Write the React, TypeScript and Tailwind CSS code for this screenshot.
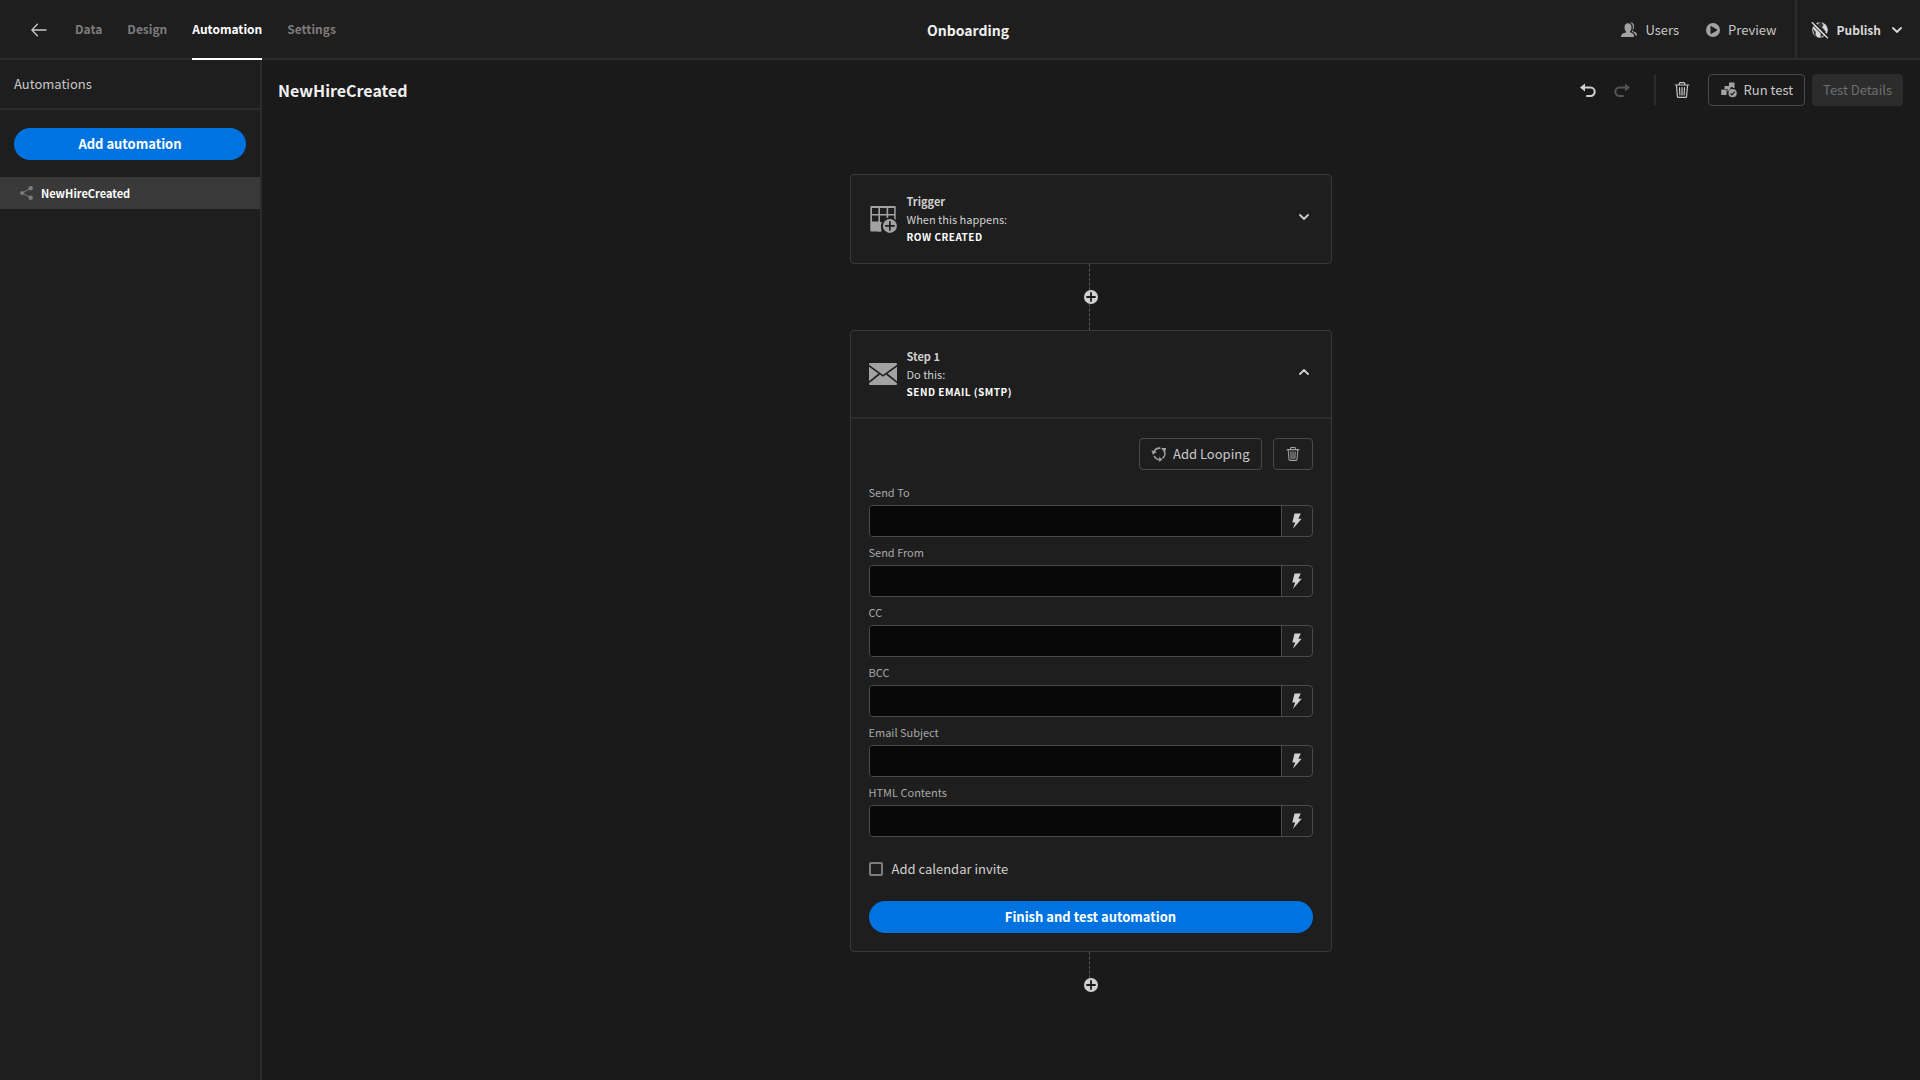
import { useState } from "react";
import type { ReactNode } from "react";

const tabs = ["Data", "Design", "Automation", "Settings"];

const fields = [
  "Send To",
  "Send From",
  "CC",
  "BCC",
  "Email Subject",
  "HTML Contents",
];

function BackIcon() {
  return (
    <svg width="16" height="16" viewBox="0 0 16 16" fill="none" stroke="currentColor" strokeWidth="1.3">
      <path d="M15.500 8H1M6.800 1.800 0.900 8l5.900 6.200" />
    </svg>
  );
}

function UsersIcon() {
  return (
    <svg width="16" height="16" viewBox="0 0 16 16" fill="currentColor">
      <path d="M0 15c0-2.600 1.300-3.800 4.300-4.300.6-.1.8-.6.7-1.200C4 8.400 3.500 7 3.500 5.400 3.500 2.600 5 1.200 7 1.200s3.500 1.400 3.500 4.200c0 1.600-.5 3-1.500 4-.1.600.1 1.100.7 1.200 2.300.5 3.400 1.700 3.400 4.400z" />
      <path d="M9.300.7c2.100-.5 3.700.9 3.700 3.800 0 1.700-.5 2.900-1.300 3.900-.1.600.100 1 .7 1.200 2.400.5 3.600 1.500 3.600 3.800h-1.800c-.300-2-1.500-3.100-3.600-3.700.9-1.100 1.300-2.500 1.300-4.300 0-2.200-.9-3.900-2.600-4.700z" />
    </svg>
  );
}

function PlayIcon() {
  return (
    <svg width="14" height="14" viewBox="0 0 14 14" fill="currentColor">
      <path
        fillRule="evenodd"
        d="M7 0a7 7 0 1 0 0 14A7 7 0 0 0 7 0zM4.500 3.400v7.200c0 .3.300.4.500.3l6-3.500c.3-.2.300-.6 0-.8L5 3.100c-.2-.100-.5 0-.5.3z"
      />
    </svg>
  );
}

function GlobeStrikeIcon() {
  return (
    <svg width="18" height="18" viewBox="0 0 18 18">
      <circle cx="9" cy="9" r="7.800" fill="currentColor" />
      <path d="M8.200 1.200 6.500 4l2 1.500-.6 2 3 3.500-1.500 2.500.6 3.400 2-2.800.4-3L15 11l-2.500-3.500L11 7l1.500-3-2-2.800z" fill="#1e1e1e" opacity=".85" />
      <path d="M1.500 7.500 5 11l-.5 2.500 2 3-3-2z" fill="#1e1e1e" opacity=".85" />
      <path d="M1.800.2 18 16.400" stroke="#1e1e1e" strokeWidth="2" />
      <path d="M.8 1.200 16.800 17.200" stroke="currentColor" strokeWidth="1.400" />
      <path d="M0 2.400 15.600 18" stroke="#1e1e1e" strokeWidth="1" />
    </svg>
  );
}

function ChevronIcon({ up = false }: { up?: boolean }) {
  return (
    <svg width="10" height="6" viewBox="0 0 10 6" fill="none" stroke="currentColor" strokeWidth="1.800" strokeLinecap="round">
      <path d={up ? "M1 5l4-4 4 4" : "M1 1l4 4 4-4"} />
    </svg>
  );
}

function UndoIcon({ flip = false }: { flip?: boolean }) {
  return (
    <svg width="16" height="14" viewBox="0 0 16 14" className={flip ? "-scale-x-100" : ""}>
      <path d="M3 4.500h7.500a4.200 4.200 0 0 1 0 8.400H7" fill="none" stroke="currentColor" strokeWidth="2" strokeLinecap="round" />
      <path d="M5 .4v8.200L0 4.500z" fill="currentColor" />
    </svg>
  );
}

function TrashIcon({ size = 16 }: { size?: number }) {
  return (
    <svg width={size} height={size} viewBox="0 0 16 16" fill="none" stroke="currentColor" strokeWidth="1.200">
      <path d="M.8 3h14.400M5.300 3V1.500c0-.6.300-.9.900-.9h3.600c.6 0 .9.300.9.900V3" />
      <path d="M2.500 3.300l.9 11c.1.700.4 1 1.100 1h7c.700 0 1-.3 1.100-1l.9-11" />
      <path d="M5.500 5.500l.4 7.500M8 5.500V13M10.500 5.500l-.4 7.500" strokeLinecap="round" />
    </svg>
  );
}

function RunTestIcon() {
  return (
    <svg width="18" height="18" viewBox="0 0 18 18" fill="currentColor">
      <path d="M9 1.500h5.500V7h-1.600V6H12L9 7z" />
      <path d="M4.500 5h5.800v3L8.700 9.500 7.500 11V8h-3z" />
      <rect x="1.200" y="8.600" width="5.400" height="5.400" />
      <circle cx="12.600" cy="12.200" r="4.100" />
      <path d="M10.500 12.300l1.500 1.600 2.800-3.300" fill="none" stroke="#1a1a1a" strokeWidth="1.200" />
    </svg>
  );
}

function ShareIcon() {
  return (
    <svg width="14" height="14" viewBox="0 0 14 14" fill="currentColor">
      <path d="M2.200 7 11 2.200M2.200 7 11 11.800" stroke="currentColor" strokeWidth="1" />
      <circle cx="2.200" cy="7" r="2.100" />
      <circle cx="10.700" cy="2.300" r="2.200" />
      <circle cx="10.700" cy="11.700" r="2.200" />
    </svg>
  );
}

function TableAddIcon() {
  return (
    <svg width="28" height="28" viewBox="0 0 28 28">
      <rect x="1.300" y="1" width="25.400" height="25.400" rx="1" fill="currentColor" />
      <path d="M3 3h6.400v6H3zM11 3h6.600v6H11zM19.200 3h6v6h-6zM3 10.600h6.400v6H3zM11 10.600h6.600V18H11zM19.200 10.600h6V18h-6z" fill="#1e1e1e" />
      <path d="M12 17h16v11H12z" fill="#1e1e1e" />
      <path d="M9.500 17h3.500l-1 3.500.5 5.900H9z" fill="currentColor" />
      <circle cx="20.900" cy="20.900" r="8.500" fill="#1e1e1e" />
      <circle cx="20.900" cy="20.900" r="7" fill="currentColor" />
      <path d="M20.900 16.800v8.200M16.800 20.900h8.200" stroke="#1e1e1e" strokeWidth="1.700" strokeLinecap="round" />
    </svg>
  );
}

function EmailIcon() {
  return (
    <svg width="28" height="28" viewBox="0 0 28 28">
      <rect y="3" width="28" height="22" rx="1" fill="currentColor" />
      <path d="M-1 5l15 10.800L29 5M-1 23l11.300-9M29 23l-11.300-9" fill="none" stroke="#1e1e1e" strokeWidth="1.600" />
    </svg>
  );
}

function LoopIcon() {
  return (
    <svg width="16" height="16" viewBox="0 0 16 16" fill="none" stroke="currentColor" strokeWidth="1.600">
      <path d="M13.200 5a5.800 5.800 0 0 1-1.700 7.400M8.800 13.600a5.800 5.800 0 0 1-5.600-3.600M3.200 5.600A5.800 5.800 0 0 1 9.400 2.200" />
      <path d="M10 2h5.200l-1.400 4.800zM8.200 10.800v5.200l3.200-2.400zM.4 4.200l1.500 4.600 3.800-2.800z" fill="currentColor" stroke="none" />
    </svg>
  );
}

function BoltIcon() {
  return (
    <svg width="10" height="16" viewBox="0 0 10 16" fill="currentColor">
      <path d="M2.500.5h6.300L6.300 5.700h3.400L1 15.700l2.200-6.200H.3z" />
    </svg>
  );
}

function AddCircleIcon() {
  return (
    <svg width="14" height="14" viewBox="0 0 14 14">
      <circle cx="7" cy="7" r="7" fill="currentColor" />
      <path d="M7 3v8M3 7h8" stroke="#1a1a1a" strokeWidth="1.800" strokeLinecap="round" />
    </svg>
  );
}

function Line() {
  return <div className="w-[3px] h-[26px] border-l border-dashed border-[#555555]" />;
}

function AddStep() {
  return (
    <button aria-label="Add step" className="text-[#d0d0d0]">
      <AddCircleIcon />
    </button>
  );
}

interface BlockHeaderProps {
  icon: ReactNode;
  title: string;
  subtitle: string;
  name: string;
  open?: boolean;
}

function BlockHeader({ icon, title, subtitle, name, open = false }: BlockHeaderProps) {
  return (
    <div
      className={`flex items-center px-[18px] h-[88px] text-[11px] leading-[18px] ${
        open ? "border-b-2 border-[#2c2c2c]" : ""
      }`}
    >
      <div className="text-[#a2a2a2]">{icon}</div>
      <div className="ml-[10px] flex-1">
        <p className="font-bold text-[#d0d0d0]">{title}</p>
        <p className="text-[#d0d0d0]">{subtitle}</p>
        <p className="font-bold text-[10px] leading-[18px] tracking-wider text-white uppercase">{name}</p>
      </div>
      <button aria-label={open ? "Collapse" : "Expand"} className="px-1 pt-1 pb-2 text-[#d0d0d0]">
        <ChevronIcon up={open} />
      </button>
    </div>
  );
}

function Field({ label }: { label: string }) {
  const id = label.toLowerCase().replace(/ /g, "-");
  return (
    <div>
      <label htmlFor={id} className="block pt-[6px] pb-1 text-[11px] leading-[18px] text-[#a8a8a8]">
        {label}
      </label>
      <div className="flex h-8 rounded-[4px] border border-[#4a4a4a] overflow-hidden">
        <input id={id} type="text" className="flex-1 min-w-0 bg-[#080808] px-3 text-[13px] text-[#e3e3e3] outline-none" />
        <button
          aria-label={`Bindings for ${label}`}
          className="w-[31px] flex items-center justify-center border-l border-[#4a4a4a] text-[#d0d0d0]"
        >
          <BoltIcon />
        </button>
      </div>
    </div>
  );
}

export default function App() {
  const [activeTab, setActiveTab] = useState("Automation");
  const [invite, setInvite] = useState(false);

  return (
    <div className="min-h-screen flex flex-col bg-[#1a1a1a] font-['Noto_Sans_CJK_SC',sans-serif] text-[13px] leading-5 text-[#c8c8c8]">
      <header className="h-[60px] grid grid-cols-[1fr_auto_1fr] bg-[#1e1e1e] border-b-2 border-[#2c2c2c] pl-[31px] pr-[15px]">
        <nav className="flex gap-[25px]">
          <button aria-label="Back" className="mr-[3px] text-[#c8c8c8]">
            <BackIcon />
          </button>
          {tabs.map((tab) => (
            <button
              key={tab}
              onClick={() => setActiveTab(tab)}
              className={`text-[12px] font-bold h-[60px] border-b-2 ${
                activeTab === tab
                  ? "text-white border-white"
                  : "text-[#7c7c7c] border-transparent"
              }`}
            >
              {tab}
            </button>
          ))}
        </nav>

        <h1 className="self-center text-[14px] font-bold text-[#f0f0f0]">Onboarding</h1>

        <div className="flex items-center justify-end">
          <button className="flex items-center gap-2 mr-[27px]">
            <span className="text-[#a2a2a2]"><UsersIcon /></span>
            Users
          </button>
          <button className="flex items-center gap-2 mr-[18px]">
            <span className="text-[#a2a2a2]"><PlayIcon /></span>
            Preview
          </button>
          <button className="h-full flex items-center gap-2 border-l-2 border-[#2c2c2c] pl-[14px] text-[12px] font-bold text-[#d8d8d8]">
            <GlobeStrikeIcon />
            Publish
            <span className="w-4 flex justify-center"><ChevronIcon /></span>
          </button>
        </div>
      </header>

      <div className="flex flex-1">
        <aside className="w-[262px] shrink-0 bg-[#1e1e1e] border-r-2 border-[#2c2c2c]">
          <h2 className="h-[50px] flex items-center px-[14px] border-b-2 border-[#2c2c2c]">Automations</h2>
          <div className="px-[14px] pt-[18px] pb-[17px]">
            <button className="w-full h-8 rounded-full bg-[#0073e0] font-bold text-white">
              Add automation
            </button>
          </div>
          <a href="#" className="h-8 flex items-center gap-[7px] px-5 bg-[#393939] text-[11px] font-bold text-white">
            <span className="text-[#7c7c7c]"><ShareIcon /></span>
            NewHireCreated
          </a>
        </aside>

        <main className="flex-1 pt-[14px] pl-4 pr-[17px] pb-20">
          <div className="h-8 flex items-center">
            <h2 className="flex-1 text-[16px] font-bold text-[#f0f0f0]">NewHireCreated</h2>
            <button aria-label="Undo" className="mr-[18px] text-[#d0d0d0]">
              <UndoIcon />
            </button>
            <button aria-label="Redo" disabled className="text-[#555555]">
              <UndoIcon flip />
            </button>
            <div className="h-[30px] border-l-2 border-[#2c2c2c] ml-6 mr-[18px]" />
            <button aria-label="Delete automation" className="mr-[18px] text-[#c8c8c8]">
              <TrashIcon />
            </button>
            <button className="h-8 flex items-center gap-[5px] px-[11px] rounded-[4px] border border-[#4a4a4a]">
              <span className="text-[#a2a2a2]"><RunTestIcon /></span>
              Run test
            </button>
            <button disabled className="h-8 ml-[7px] px-[11px] rounded-[4px] bg-[#2c2c2c] text-[#6e6e6e]">
              Test Details
            </button>
          </div>

          <div className="mt-[68px] flex flex-col items-center">
            <section className="w-full max-w-[482px] rounded-[4px] border border-[#393939] bg-[#1e1e1e]">
              <BlockHeader icon={<TableAddIcon />} title="Trigger" subtitle="When this happens:" name="Row Created" />
            </section>

            <Line />
            <AddStep />
            <Line />

            <section className="w-full max-w-[482px] rounded-[4px] border border-[#393939] bg-[#1e1e1e]">
              <BlockHeader icon={<EmailIcon />} title="Step 1" subtitle="Do this:" name="Send Email (SMTP)" open />

              <div className="px-[18px] pt-[19px] pb-[18px]">
                <div className="flex justify-end gap-[11px] mb-[7px]">
                  <button className="h-8 flex items-center gap-[6px] px-[11px] rounded-[4px] border border-[#4a4a4a]">
                    <span className="text-[#a2a2a2]"><LoopIcon /></span>
                    Add Looping
                  </button>
                  <button
                    aria-label="Delete step"
                    className="w-10 h-8 flex items-center justify-center rounded-[4px] border border-[#4a4a4a] text-[#a2a2a2]"
                  >
                    <TrashIcon size={14} />
                  </button>
                </div>

                {fields.map((label) => (
                  <Field key={label} label={label} />
                ))}

                <label className="mt-[22px] flex items-center gap-[9px] w-fit text-[#d0d0d0]">
                  <input
                    type="checkbox"
                    checked={invite}
                    onChange={(e) => setInvite(e.target.checked)}
                    className="appearance-none size-[14px] rounded-[2px] border-2 border-[#7c7c7c] checked:bg-[#0073e0]"
                  />
                  Add calendar invite
                </label>

                <button className="mt-[22px] w-full h-8 rounded-full bg-[#0073e0] font-bold text-white">
                  Finish and test automation
                </button>
              </div>
            </section>

            <Line />
            <AddStep />
          </div>
        </main>
      </div>
    </div>
  );
}
